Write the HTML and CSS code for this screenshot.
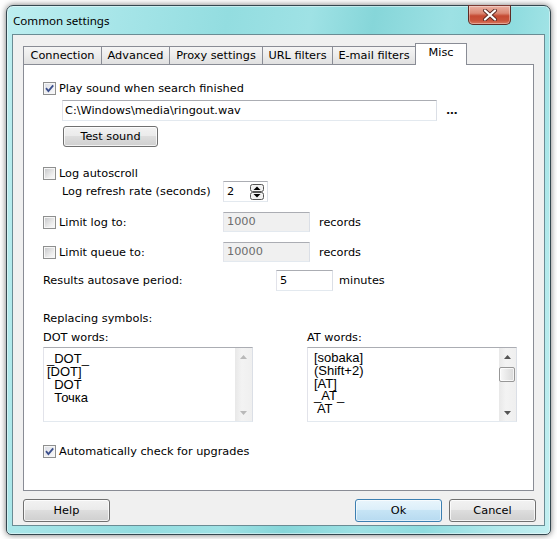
FILE: index.html
```html
<!DOCTYPE html>
<html>
<head>
<meta charset="utf-8">
<title>Common settings</title>
<link rel="stylesheet" href="styles.css">
</head>
<body>
<div class="window">
  <div class="titlebar">
    <span class="title">Common settings</span>
    <div class="close">
      <svg width="16" height="12" viewBox="0 0 16 12"><path d="M3 1.5 L13 10.5 M13 1.5 L3 10.5" stroke="#5b2a24" stroke-width="4" stroke-linecap="round"/><path d="M3 1.5 L13 10.5 M13 1.5 L3 10.5" stroke="#fff" stroke-width="2.2" stroke-linecap="round"/></svg>
    </div>
  </div>
  <div class="client">
    <div class="tabs">
      <div class="tab w1">Connection</div>
      <div class="tab w2">Advanced</div>
      <div class="tab w3">Proxy settings</div>
      <div class="tab w4">URL filters</div>
      <div class="tab w5">E-mail filters</div>
      <div class="tab active w6">Misc</div>
    </div>
    <div class="panel">
      <div class="chk r-play">
        <span class="cb checked"><svg width="9" height="9" viewBox="0 0 9 9"><path d="M1 4.2 L3.4 7 L8.2 1.3" fill="none" stroke="#3b4f8c" stroke-width="1.8"/></svg></span>
        <span>Play sound when search finished</span>
      </div>
      <div class="file-row">
        <div class="field file">C:\Windows\media\ringout.wav</div>
        <span class="dots">...</span>
      </div>
      <button class="btn test">Test sound</button>
      <div class="chk r-log">
        <span class="cb"></span>
        <span>Log autoscroll</span>
      </div>
      <div class="spin-row">
        <span class="spin-label">Log refresh rate (seconds)</span>
        <div class="field spin">
          <span>2</span>
          <svg class="spin-btns" width="14" height="16" viewBox="0 0 14 16"><rect x="0.5" y="0.5" width="13" height="7" rx="2" fill="#f2f2f2" stroke="#555"/><rect x="0.5" y="8.5" width="13" height="7" rx="2" fill="#f2f2f2" stroke="#555"/><path d="M3.5 6 L7 2.5 L10.5 6Z" fill="#000"/><path d="M3.5 10 L7 13.5 L10.5 10Z" fill="#000"/></svg>
        </div>
      </div>
      <div class="lim-row r-lim1">
        <div class="chk lim-chk"><span class="cb"></span><span>Limit log to:</span></div>
        <div class="field dis">1000</div>
        <span class="unit">records</span>
      </div>
      <div class="lim-row r-lim2">
        <div class="chk lim-chk"><span class="cb"></span><span>Limit queue to:</span></div>
        <div class="field dis">10000</div>
        <span class="unit">records</span>
      </div>
      <div class="auto-row">
        <span class="auto-label">Results autosave period:</span>
        <div class="field period">5</div>
        <span class="unit2">minutes</span>
      </div>
      <div class="plain r-repl">Replacing symbols:</div>
      <div class="pair r-labels">
        <span>DOT words:</span>
        <span>AT words:</span>
      </div>
      <div class="pair r-lists">
        <div class="list">
          <div class="items dot">_DOT_
[DOT]
  DOT
  Точка</div>
          <div class="sb">
            <div class="sb-btn"><svg width="7" height="4" viewBox="0 0 7 4"><path d="M0 4 L3.5 0 L7 4Z" fill="#b9b9b9"/></svg></div>
            <div class="sb-track"></div>
            <div class="sb-btn"><svg width="7" height="4" viewBox="0 0 7 4"><path d="M0 0 L3.5 4 L7 0Z" fill="#b9b9b9"/></svg></div>
          </div>
        </div>
        <div class="list">
          <div class="items at">[sobaka]
(Shift+2)
[AT]
_AT_
 AT</div>
          <div class="sb">
            <div class="sb-btn"><svg width="7" height="4" viewBox="0 0 7 4"><path d="M0 4 L3.5 0 L7 4Z" fill="#555"/></svg></div>
            <div class="sb-track"><div class="thumb"></div></div>
            <div class="sb-btn"><svg width="7" height="4" viewBox="0 0 7 4"><path d="M0 0 L3.5 4 L7 0Z" fill="#555"/></svg></div>
          </div>
        </div>
      </div>
      <div class="chk r-upd">
        <span class="cb checked"><svg width="9" height="9" viewBox="0 0 9 9"><path d="M1 4.2 L3.4 7 L8.2 1.3" fill="none" stroke="#3b4f8c" stroke-width="1.8"/></svg></span>
        <span>Automatically check for upgrades</span>
      </div>
    </div>
    <div class="buttons">
      <button class="btn dlg">Help</button>
      <div class="right-btns">
        <button class="btn dlg default">Ok</button>
        <button class="btn dlg">Cancel</button>
      </div>
    </div>
  </div>
</div>
</body>
</html>
```
FILE: styles.css
```css
* { box-sizing: border-box; }
html, body { margin: 0; padding: 0; background: #fff; }
body {
  font-family: "DejaVu Sans", Verdana, sans-serif;
  font-size: 11.3px;
  color: #000;
  width: 557px;
  height: 539px;
  overflow: hidden;
}
.window {
  margin: 5px 0 0 6px;
  width: 545px;
  height: 530px;
  border: 1px solid #34474f;
  border-radius: 7px 7px 5px 5px;
  background: linear-gradient(100deg, #bdeef0 0%, #a6e5e8 18%, #93dde0 35%, #9fe2e5 48%, #86d6d9 58%, #9de1e4 70%, #8fdcdf 80%, #b3eaec 92%, #c3eff1 100%);
  box-shadow: 0 0 6px rgba(0,0,0,0.55), inset 0 0 0 1px rgba(255,255,255,0.45);
  padding: 0 5px 8px;
  display: flex;
  flex-direction: column;
}
.titlebar {
  height: 28px;
  display: flex;
  align-items: flex-start;
  padding-left: 1px;
}
.title {
  font-family: "Noto Sans", "Open Sans", sans-serif;
  font-size: 11.6px;
  margin-top: 7px;
  line-height: 15px;
  color: #000;
}
.close {
  margin-left: auto;
  margin-right: 34px;
  margin-top: -1px;
  width: 43px;
  height: 20px;
  border: 1px solid #5e2b25;
  border-top-color: #7a3a33;
  border-radius: 0 0 5px 5px;
  background: linear-gradient(#eab0a2 0%, #dc8a76 40%, #c54a33 55%, #c9533a 80%, #d9785e 100%);
  box-shadow: inset 0 0 0 1px rgba(255,255,255,0.35);
  display: flex;
  align-items: center;
  justify-content: center;
}
.client {
  flex: 1;
  background: #f0f0f0;
  border: 1px solid #6a8c94;
  padding: 8px 0 0 10px;
}
.tabs {
  display: flex;
  align-items: flex-end;
  height: 21px;
}
.tab {
  height: 18px;
  border: 1px solid #898c95;
  border-bottom: none;
  margin-right: -1px;
  background: linear-gradient(#f5f5f5, #ececec 50%, #e0e0e0);
  text-align: center;
  line-height: 17px;
  white-space: nowrap;
}
.tab.active {
  height: 22px;
  background: #fff;
  margin-bottom: -1px;
  position: relative;
  z-index: 1;
  line-height: 18px;
}
.w1 { width: 79px; }
.w2 { width: 69px; }
.w3 { width: 94px; }
.w4 { width: 71px; }
.w5 { width: 84px; }
.w6 { width: 52px; }
.panel {
  width: 511px;
  height: 427px;
  background: #fff;
  border: 1px solid #898c95;
  padding: 17px 0 0 19px;
}
.chk {
  display: flex;
  align-items: center;
  height: 13px;
  white-space: nowrap;
}
.cb {
  width: 13px;
  height: 13px;
  flex: none;
  border: 1px solid #8e8f8f;
  padding: 1px;
  background: linear-gradient(135deg, #c9cacc, #eeeeee 70%, #f8f8f8) content-box, #f6f6f6;
  margin-right: 3px;
}
.cb.checked {
  background: linear-gradient(135deg, #dfe1e7, #f7f7f9) content-box, #f6f6f6;
}
.cb svg { display: block; }
.file-row {
  display: flex;
  align-items: center;
  height: 21px;
  margin-top: 5px;
  padding-left: 19px;
}
.field {
  height: 21px;
  border: 1px solid;
  border-color: #abadb3 #dbdfe6 #e3e9ef #e2e3ea;
  background: #fff;
  padding-left: 2px;
  line-height: 19px;
  white-space: nowrap;
}
.file { width: 375px; }
.dots {
  margin-left: 9px;
  font-weight: bold;
  letter-spacing: -0.5px;
  color: #111;
}
.btn {
  font: inherit;
  color: #000;
  border: 1px solid #707070;
  border-radius: 3px;
  background: linear-gradient(#f2f2f2 0%, #ebebeb 45%, #dddddd 50%, #cfcfcf 100%);
  box-shadow: inset 0 0 0 1px rgba(255,255,255,0.75);
  padding: 0;
}
.test {
  display: block;
  margin: 5px 0 0 20px;
  width: 95px;
  height: 21px;
}
.r-log { margin-top: 20px; }
.spin-row {
  display: flex;
  align-items: center;
  height: 21px;
  margin-top: 1px;
}
.spin-label {
  margin-left: 19px;
  width: 161px;
  white-space: nowrap;
}
.spin {
  width: 45px;
  display: flex;
  align-items: center;
  padding-left: 3px;
}
.spin-btns {
  margin-left: auto;
  margin-right: 3px;
  display: block;
}
.lim-row {
  display: flex;
  align-items: center;
  height: 20px;
  margin-top: 10px;
}
.lim-chk { width: 180px; }
.dis {
  width: 87px;
  height: 20px;
  line-height: 18px;
  padding-left: 3px;
  background: #f0f0f0;
  color: #6d6d6d;
}
.unit { margin-left: 9px; }
.auto-row {
  display: flex;
  align-items: center;
  height: 21px;
  margin-top: 8px;
}
.auto-label { width: 233px; }
.period { width: 57px; padding-left: 3px; }
.unit2 { margin-left: 6px; }
.plain {
  height: 13px;
  line-height: 13px;
}
.r-repl { margin-top: 21px; }
.pair {
  display: grid;
  grid-template-columns: 210px 210px;
  column-gap: 54px;
}
.r-labels {
  margin-top: 6px;
  height: 13px;
  line-height: 13px;
}
.r-lists { margin-top: 3px; }
.list {
  height: 75px;
  border: 1px solid;
  border-color: #abadb3 #dbdfe6 #e3e9ef #e2e3ea;
  background: #fff;
  display: flex;
}
.items {
  flex: 1;
  font-family: "Liberation Sans", Arial, sans-serif;
  font-size: 13px;
  line-height: 13px;
  white-space: pre;
  overflow: hidden;
}
.items.dot { padding: 4px 0 0 3px; }
.items.at { padding: 4px 0 0 6px; line-height: 12.8px; }
.sb {
  width: 17px;
  display: flex;
  flex-direction: column;
  background: linear-gradient(90deg, #e8e8e8, #f3f3f3 40%, #efefef);
}
.sb-btn {
  height: 17px;
  display: flex;
  align-items: center;
  justify-content: center;
}
.sb-btn svg { display: block; }
.sb-track {
  flex: 1;
  padding: 2px 1px 0 0;
}
.thumb {
  height: 15px;
  border: 1px solid #979797;
  border-radius: 2px;
  background: linear-gradient(90deg, #f8f8f8, #e8e8e8 50%, #d9d9d9);
  box-shadow: inset 0 0 0 1px rgba(255,255,255,0.7);
}
.r-upd { margin-top: 23px; }
.buttons {
  display: flex;
  width: 513px;
  margin-top: 8px;
  justify-content: space-between;
}
.right-btns {
  display: flex;
  gap: 7px;
}
.dlg {
  width: 87px;
  height: 23px;
}
.btn.default {
  border-color: #3c7fb1;
  background: linear-gradient(#e9f5fc 0%, #dcefFA 45%, #c6e4f5 50%, #b7daf0 100%);
  box-shadow: inset 0 0 0 1px rgba(255,255,255,0.6);
}
```
